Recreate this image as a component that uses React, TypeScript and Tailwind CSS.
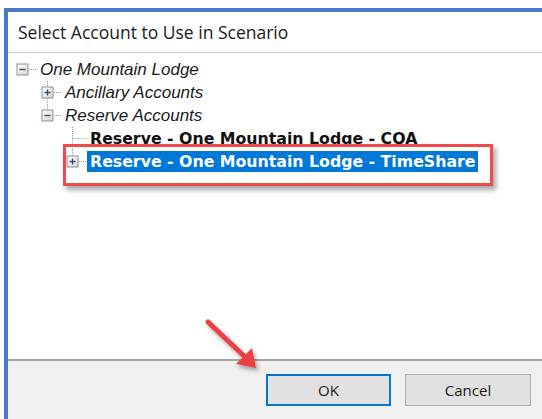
import React from "react";

type Node = {
  label: string;
  level: number;
  style: "italic" | "bold";
  expander?: "plus" | "minus";
  last: boolean;
  ancestorsLast: boolean[];
  selected?: boolean;
};

const rows: Node[] = [
  { label: "One Mountain Lodge", level: 0, style: "italic", expander: "minus", last: true, ancestorsLast: [] },
  { label: "Ancillary Accounts", level: 1, style: "italic", expander: "plus", last: false, ancestorsLast: [true] },
  { label: "Reserve Accounts", level: 1, style: "italic", expander: "minus", last: true, ancestorsLast: [true] },
  { label: "Reserve - One Mountain Lodge - COA", level: 2, style: "bold", last: false, ancestorsLast: [true, true] },
  {
    label: "Reserve - One Mountain Lodge - TimeShare",
    level: 2,
    style: "bold",
    expander: "plus",
    last: true,
    ancestorsLast: [true, true],
    selected: true,
  },
];

const ROW_H = 23;
const DOT = "#9a9a9a";

function Expander({ kind }: { kind: "plus" | "minus" }) {
  return (
    <g>
      <defs>
        <linearGradient id={`exp-${kind}`} x1="0" y1="0" x2="1" y2="1">
          <stop offset="0" stopColor="#ffffff" />
          <stop offset="1" stopColor="#d6d6d6" />
        </linearGradient>
      </defs>
      <rect x="7" y="6" width="11" height="11" fill={`url(#exp-${kind})`} stroke="#8e8f8f" strokeWidth="1" />
      <line x1="9.5" y1="11.5" x2="15.5" y2="11.5" stroke="#2f4a7c" strokeWidth="1.4" />
      {kind === "plus" && <line x1="12.5" y1="8.5" x2="12.5" y2="14.5" stroke="#2f4a7c" strokeWidth="1.4" />}
    </g>
  );
}

function OwnCell({ node }: { node: Node }) {
  const cx = 12.5;
  const cy = 11.5;
  const hasBox = !!node.expander;
  return (
    <svg width="27" height={ROW_H} className="shrink-0 block">
      {node.level > 0 && (
        <line x1={cx} y1="0" x2={cx} y2={hasBox ? 6 : cy} stroke={DOT} strokeDasharray="1 1" />
      )}
      {!node.last && (
        <line x1={cx} y1={hasBox ? 17 : cy} x2={cx} y2={ROW_H} stroke={DOT} strokeDasharray="1 1" />
      )}
      <line x1={hasBox ? 19 : cx} y1={cy} x2="27" y2={cy} stroke={DOT} strokeDasharray="1 1" />
      {node.expander && <Expander kind={node.expander} />}
    </svg>
  );
}

function TreeRow({ node }: { node: Node }) {
  return (
    <div className="flex items-center" style={{ height: ROW_H }}>
      {node.ancestorsLast.map((isLast, i) => (
        <svg key={i} width="25" height={ROW_H} className="shrink-0 block">
          {!isLast && <line x1="12.5" y1="0" x2="12.5" y2={ROW_H} stroke={DOT} strokeDasharray="1 1" />}
        </svg>
      ))}
      <OwnCell node={node} />
      <span
        className={
          "px-[3px] h-[21px] flex items-center whitespace-nowrap leading-none " +
          (node.style === "italic"
            ? "italic text-[17px] text-[#1a1a22] font-['Liberation_Sans',Arial,sans-serif] "
            : "font-bold text-[15.75px] text-[#111111] font-['DejaVu_Sans',Verdana,sans-serif] ") +
          (node.selected ? "bg-[#0078d7] text-white" : "")
        }
      >
        {node.label}
      </span>
    </div>
  );
}

export default function App() {
  return (
    <div className="relative w-[542px] h-[419px] overflow-hidden bg-white pt-[8px] pl-[4px]">
      <div className="flex flex-col h-[411px] border-l-4 border-t-4 border-[#4a78cc]">
        <div className="h-[41px] shrink-0 flex items-center pl-[10px] border-b border-[#cdcdcd] text-[17.5px] text-[#1a1a1a] font-['Open_Sans','Noto_Sans',sans-serif]">
          Select Account to Use in Scenario
        </div>
        <div className="h-[306px] shrink-0 bg-white pt-[5px] pl-[2px]">
          {rows.map((n, i) => (
            <TreeRow key={i} node={n} />
          ))}
        </div>
        <div className="flex-1 bg-[#f0f0f0] border-t-2 border-[#a4a4a4] flex justify-end items-start pt-[13px] pr-[11px] gap-[14px]">
          <button className="w-[125px] h-[32px] bg-[#e1e1e1] border-2 border-[#0078d7] text-[15px] text-[#1a1a1a] font-['Open_Sans','Noto_Sans',sans-serif]">
            OK
          </button>
          <button className="w-[126px] h-[32px] bg-[#e1e1e1] border border-[#adadad] text-[15px] text-[#1a1a1a] font-['Open_Sans','Noto_Sans',sans-serif]">
            Cancel
          </button>
        </div>
      </div>

      {/* callout frame around the selected account */}
      <div className="absolute left-[63px] top-[144px] w-[430px] h-[42px] border-[3px] border-[#ef4b4b] shadow-[3px_4px_5px_rgba(0,0,0,0.35)]" />

      {/* pointer arrow toward the OK button */}
      <svg className="absolute left-0 top-0" width="542" height="419" viewBox="0 0 542 419">
        <defs>
          <filter id="arrowShadow" x="-20%" y="-20%" width="140%" height="140%">
            <feDropShadow dx="2" dy="3" stdDeviation="2" floodColor="#000" floodOpacity="0.35" />
          </filter>
        </defs>
        <g filter="url(#arrowShadow)">
          <line x1="208" y1="322" x2="243" y2="355" stroke="#ee4040" strokeWidth="5" strokeLinecap="round" />
          <polygon points="256,368 236,364 252,348" fill="#ee4040" />
        </g>
      </svg>
    </div>
  );
}
